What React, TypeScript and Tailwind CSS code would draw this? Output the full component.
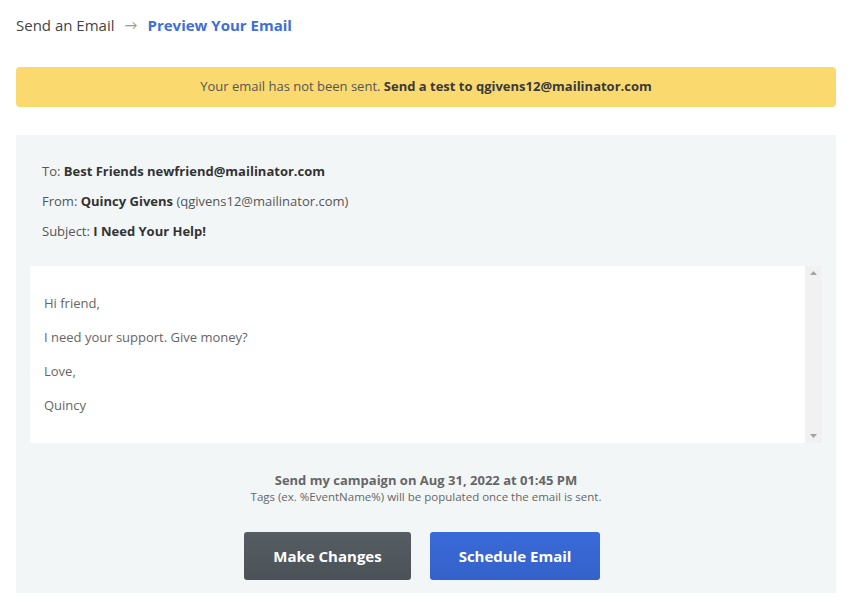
import React from 'react';

const font = { fontFamily: '"Open Sans", Lato, Arial, sans-serif' };

const bodyLines = ['Hi friend,', 'I need your support. Give money?', 'Love,', 'Quincy'];

export default function App() {
  return (
    <div className="w-[852px] h-[606px] bg-white" style={font}>
      {/* Breadcrumb */}
      <div className="flex items-center h-[50px] px-4 pt-[1px] text-[15px]">
        <span className="text-[#444]">Send an Email</span>
        <span className="text-[#999] text-[13px] mx-[10px]">→</span>
        <span className="font-bold text-[#3d6fd8]">Preview Your Email</span>
      </div>

      <div className="px-4 mt-[17px]">
        {/* Warning banner */}
        <div className="h-[40px] rounded-[4px] bg-[#fad96e] flex items-center justify-center text-[13px] text-[#555]">
          <span>Your email has not been sent.&nbsp;</span>
          <span className="font-bold text-[#3a3a3a]">Send a test to qgivens12@mailinator.com</span>
        </div>

        {/* Preview panel */}
        <div className="mt-[28px] bg-[#f3f6f7] h-[458px] px-[14px] pt-[28px]">
          <div className="px-[12px] flex flex-col gap-[13px] text-[13px] text-[#555] leading-[17px]">
            <div>To: <span className="font-bold text-[#333]">Best Friends newfriend@mailinator.com</span></div>
            <div>
              From: <span className="font-bold text-[#333]">Quincy Givens</span> (qgivens12@mailinator.com)
            </div>
            <div>Subject: <span className="font-bold text-[#333]">I Need Your Help!</span></div>
          </div>

          {/* Body */}
          <div className="mt-[26px] h-[177px] bg-white flex">
            <div className="flex-1 pl-[14px] pt-[29px] flex flex-col gap-[17px] text-[13px] text-[#666] leading-[17px]">
              {bodyLines.map(l => (
                <div key={l}>{l}</div>
              ))}
            </div>
            <div className="w-[17px] bg-[#f1f1f1] flex flex-col items-center justify-between py-[5px]">
              <svg width="7" height="4" viewBox="0 0 7 4"><path d="M3.5 0L7 4H0z" fill="#a3a3a3" /></svg>
              <svg width="7" height="4" viewBox="0 0 7 4"><path d="M0 0h7L3.5 4z" fill="#a3a3a3" /></svg>
            </div>
          </div>

          {/* Schedule info */}
          <div className="mt-[29px] flex flex-col items-center text-[#666]">
            <div className="text-[13px] font-bold leading-[17px]">Send my campaign on Aug 31, 2022 at 01:45 PM</div>
            <div className="text-[11.5px] leading-[14px] mt-[1px]">Tags (ex. %EventName%) will be populated once the email is sent.</div>
          </div>

          {/* Actions */}
          <div className="mt-[28px] pr-[8px] flex justify-center gap-[19px]">
            <button className="w-[167px] h-[48px] rounded-[3px] bg-gradient-to-b from-[#555d63] to-[#4b5358] text-white font-bold text-[15px]">
              Make Changes
            </button>
            <button className="w-[170px] h-[48px] rounded-[3px] bg-gradient-to-b from-[#3a6ad8] to-[#3462ca] text-white font-bold text-[15px]">
              Schedule Email
            </button>
          </div>
        </div>
      </div>
    </div>
  );
}
